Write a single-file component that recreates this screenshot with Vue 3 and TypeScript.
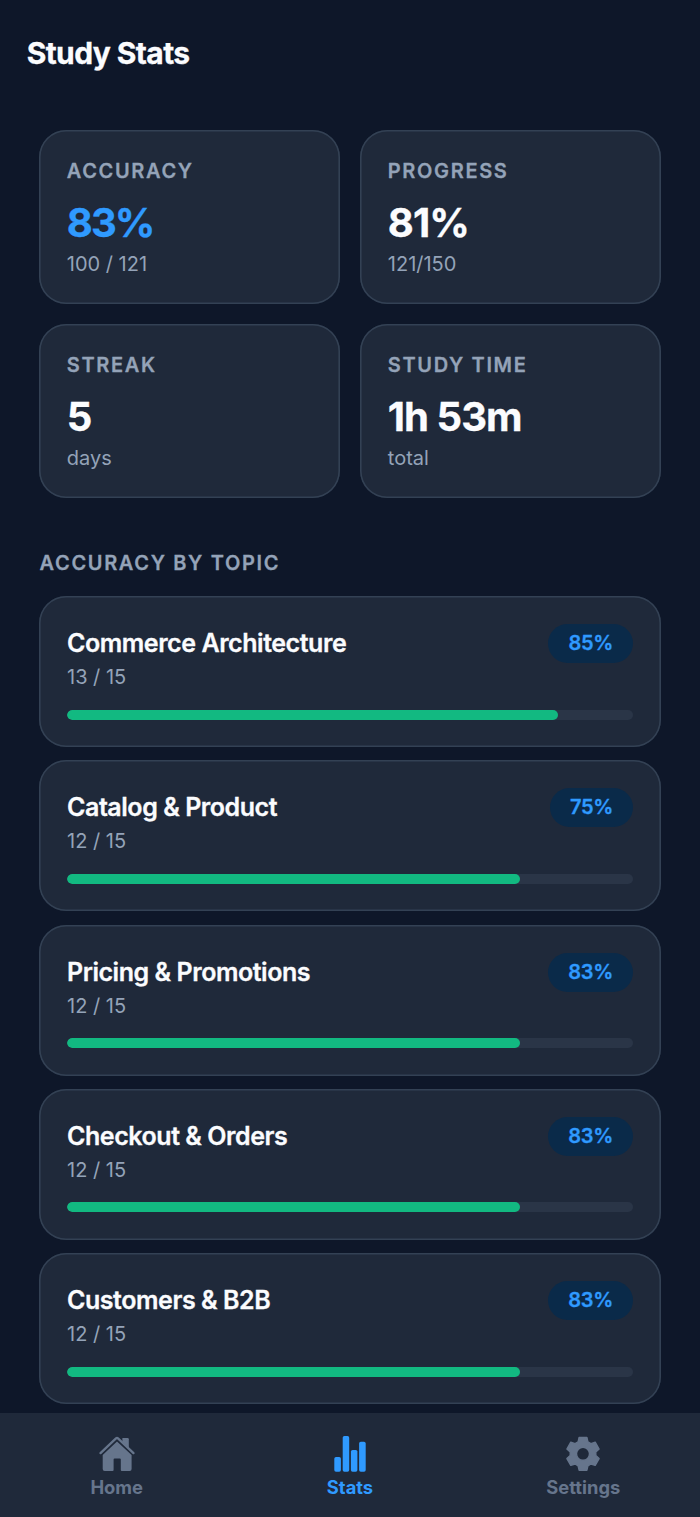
<script setup lang="ts">
interface Stat {
  label: string
  value: string
  detail: string
  accent?: boolean
}

interface Topic {
  name: string
  correct: number
  total: number
  accuracy: number
}

const stats: Stat[] = [
  { label: 'Accuracy', value: '83%', detail: '100 / 121', accent: true },
  { label: 'Progress', value: '81%', detail: '121/150' },
  { label: 'Streak', value: '5', detail: 'days' },
  { label: 'Study Time', value: '1h 53m', detail: 'total' },
]

const topics: Topic[] = [
  { name: 'Commerce Architecture', correct: 13, total: 15, accuracy: 85 },
  { name: 'Catalog & Product', correct: 12, total: 15, accuracy: 75 },
  { name: 'Pricing & Promotions', correct: 12, total: 15, accuracy: 83 },
  { name: 'Checkout & Orders', correct: 12, total: 15, accuracy: 83 },
  { name: 'Customers & B2B', correct: 12, total: 15, accuracy: 83 },
]

const fill = (t: Topic): string => `${(t.correct / t.total) * 100}%`
</script>

<template>
  <div class="screen">
    <header class="header">
      <h1 class="title">Study Stats</h1>
    </header>

    <main class="content">
      <section class="stats">
        <article v-for="s in stats" :key="s.label" class="card stat">
          <div class="label">{{ s.label }}</div>
          <div class="value" :class="{ accent: s.accent }">{{ s.value }}</div>
          <div class="detail">{{ s.detail }}</div>
        </article>
      </section>

      <h2 class="label heading">Accuracy by Topic</h2>

      <section class="topics">
        <article v-for="t in topics" :key="t.name" class="card topic">
          <div class="row">
            <div>
              <div class="name">{{ t.name }}</div>
              <div class="detail">{{ t.correct }} / {{ t.total }}</div>
            </div>
            <span class="badge">{{ t.accuracy }}%</span>
          </div>
          <div class="track">
            <div class="bar" :style="{ width: fill(t) }"></div>
          </div>
        </article>
      </section>
    </main>

    <nav class="tabs">
      <a class="tab">
        <svg class="icon" viewBox="0 0 40 40" fill="currentColor">
          <path d="M25.4 5h5.2a1.2 1.2 0 0 1 1.2 1.2v9L25.4 9.3z" />
          <path d="M20 8.6 34.6 22v14a2 2 0 0 1-2 2h-7.8a1 1 0 0 1-1-1V26.6a1 1 0 0 0-1-1h-5.2a1 1 0 0 0-1 1V37a1 1 0 0 1-1 1H7.7a2 2 0 0 1-2-2V22z" />
          <path class="roof" d="M3.5 20.1 19 5.4a1.5 1.5 0 0 1 2 0l15.5 14.7" />
        </svg>
        <span>Home</span>
      </a>
      <a class="tab active">
        <svg class="icon" viewBox="0 0 40 40" fill="currentColor">
          <rect x="4.3" y="24" width="6.6" height="14.7" rx="1.7" />
          <rect x="12.7" y="3" width="6.5" height="35.7" rx="1.7" />
          <rect x="20.9" y="16.9" width="6.5" height="21.8" rx="1.7" />
          <rect x="29.1" y="8.8" width="6.6" height="29.9" rx="1.7" />
        </svg>
        <span>Stats</span>
      </a>
      <a class="tab">
        <svg class="icon" viewBox="-20 -20.8 40 40" fill="none">
          <path class="gear" fill-rule="evenodd" d="M-3.9-16.4H3.9L4.9-12 7.9-10.2 12.2-11.6 16.1-4.8 12.8-1.7V1.7L16.1 4.8 12.2 11.6 7.9 10.2 4.9 12 3.9 16.4H-3.9L-4.9 12-7.9 10.2-12.2 11.6-16.1 4.8-12.8 1.7V-1.7L-16.1-4.8-12.2-11.6-7.9-10.2-4.9-12ZM0-6.5A6.5 6.5 0 1 0 0 6.5 6.5 6.5 0 1 0 0-6.5Z" />
        </svg>
        <span>Settings</span>
      </a>
    </nav>
  </div>
</template>

<style>
body {
  margin: 0;
  background: #0e1729;
}
</style>

<style scoped>
.screen {
  box-sizing: border-box;
  height: 1517px;
  display: flex;
  flex-direction: column;
  overflow: hidden;
  background: #0e1729;
  color: #fbfcfe;
  font-family: Inter, "Liberation Sans", sans-serif;
}
.header {
  flex: none;
  height: 106px;
  padding: 0 26.67px;
  display: flex;
  align-items: center;
}
.title {
  margin: 0;
  font-size: 30px;
  line-height: 40px;
  font-weight: 720;
  letter-spacing: -0.6px;
}
.title,
.value,
.name,
.label,
.badge {
  -webkit-text-stroke: 0.3px currentColor;
}
.content {
  flex: 1;
  min-height: 0;
  overflow: hidden;
  padding: 24px 39px 0;
}
.stats {
  display: grid;
  grid-template-columns: 1fr 1fr;
  gap: 20px;
}
.card {
  box-sizing: border-box;
  background: #1f293a;
  box-shadow: inset 0 0 0 1.6px #334154;
  border-radius: 27px;
}
.stat {
  height: 174px;
  padding: 28px 27.8px;
}
.label {
  font-size: 20px;
  line-height: 27px;
  font-weight: 620;
  letter-spacing: 1.65px;
  text-transform: uppercase;
  color: #94a3b8;
}
.value {
  margin-top: 12.5px;
  font-size: 40px;
  line-height: 50px;
  font-weight: 730;
  letter-spacing: -0.95px;
}
.value.accent {
  letter-spacing: -1.9px;
  color: #2f9aff;
}
.detail {
  margin-top: 3px;
  font-size: 20px;
  line-height: 27px;
  color: #94a3b8;
}
.heading {
  margin: 52px 0 19px 0.6px;
}
.topics {
  display: flex;
  flex-direction: column;
  gap: 13.3px;
}
.topic {
  height: 151px;
  padding: 28px;
}
.row {
  display: flex;
  justify-content: space-between;
  align-items: flex-start;
}
.name {
  font-size: 25px;
  line-height: 38px;
  font-weight: 630;
  letter-spacing: -0.45px;
}
.topic .detail {
  margin-top: 2px;
}
.badge {
  padding: 6px 20px;
  border-radius: 20px;
  background: #0a2a49;
  color: #2f9aff;
  font-size: 20px;
  line-height: 27px;
  font-weight: 640;
  letter-spacing: -0.3px;
}
.track {
  margin-top: 18.6px;
  height: 10px;
  border-radius: 5px;
  background: #2a3547;
  overflow: hidden;
}
.bar {
  height: 100%;
  border-radius: 5px;
  background: #12b981;
}
.tabs {
  flex: none;
  height: 104px;
  box-sizing: border-box;
  padding-top: 20px;
  display: flex;
  background: #1f293a;
}
.tab {
  flex: 1;
  display: flex;
  flex-direction: column;
  align-items: center;
  gap: 2px;
  color: #66758c;
  font-size: 18.33px;
  line-height: 25px;
  font-weight: 650;
}
.tab.active {
  color: #2f9aff;
}
.icon {
  width: 40px;
  height: 40px;
}
.roof {
  fill: none;
  stroke: currentColor;
  stroke-width: 2.3;
  stroke-linecap: round;
}
.gear {
  fill: currentColor;
  stroke: currentColor;
  stroke-width: 1.4;
  stroke-linejoin: round;
}
</style>
